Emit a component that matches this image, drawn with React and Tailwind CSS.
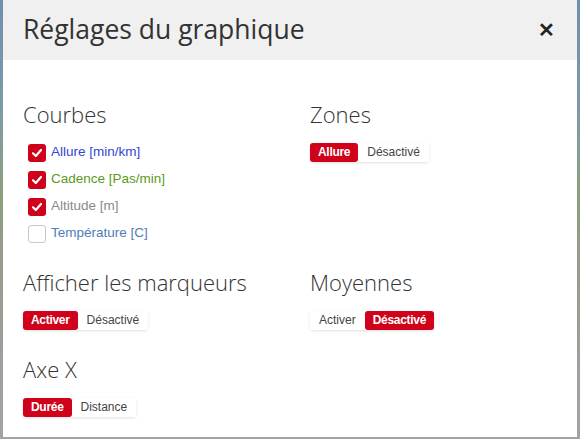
import React from "react";

const OS = { fontFamily: '"Open Sans", "Noto Sans", sans-serif' };
const AR = { fontFamily: '"Liberation Sans", Arial, sans-serif' };

function Check({ checked }) {
  if (!checked)
    return <span className="inline-block w-[18px] h-[18px] rounded-[3px] border border-[#c8c8c8] bg-white" />;
  return (
    <span className="inline-flex w-[18px] h-[18px] rounded-[3px] bg-[#d0021b] items-center justify-center">
      <svg width="12" height="12" viewBox="0 0 12 12">
        <path d="M2 6.3 L4.8 9 L10 3" stroke="white" strokeWidth="2.2" fill="none" strokeLinecap="round" strokeLinejoin="round" />
      </svg>
    </span>
  );
}

function Row({ checked, color, children }) {
  return (
    <div className="flex items-center h-[27px] pl-[5px]">
      <Check checked={checked} />
      <span className={`ml-[5px] text-[13.5px] ${color}`} style={AR}>{children}</span>
    </div>
  );
}

function Toggle({ items, active }) {
  return (
    <div className="inline-flex rounded-[3px] shadow-[0_1px_3px_rgba(0,0,0,0.12)] h-[19px]" style={AR}>
      {items.map((t, i) =>
        i === active ? (
          <span key={t} className="px-[8px] flex items-center bg-[#d0021b] text-white font-bold text-[12px] rounded-[3px] tracking-[-0.3px]">{t}</span>
        ) : (
          <span key={t} className="px-[9px] flex items-center bg-white text-[#444] text-[12px]">{t}</span>
        )
      )}
    </div>
  );
}

function H({ children }) {
  return <h3 className="text-[22px] leading-[28px] text-[#333] font-light" style={OS}>{children}</h3>;
}

export default function App() {
  return (
    <div className="w-[580px] h-[439px] relative overflow-hidden bg-[linear-gradient(180deg,#6e8fae_0%,#7e9aa8_25%,#8aa07a_45%,#9a9a90_60%,#a3a3a3_100%)]">
      <div className="absolute left-[3px] right-[3px] top-0 bottom-[2px] bg-white flex flex-col">
        <div className="h-[60px] bg-[#f0f0f0] flex items-center justify-between pl-[20px] pr-[22px]">
          <h2 className="text-[26.5px] text-[#333] leading-none -mt-[2px]" style={OS}>Réglages du graphique</h2>
          <span className="text-[20px] font-bold text-[#222] leading-none" style={AR}>✕</span>
        </div>
        <div className="pl-[20px] pt-[40px] grid grid-cols-[287px_1fr]">
          <div>
            <H>Courbes</H>
            <div className="mt-[11px]">
              <Row checked color="text-[#3346d3]">Allure [min/km]</Row>
              <Row checked color="text-[#5b9a1c]">Cadence [Pas/min]</Row>
              <Row checked color="text-[#8a8a8a]">Altitude [m]</Row>
              <Row color="text-[#4f7db3]">Température [C]</Row>
            </div>
          </div>
          <div>
            <H>Zones</H>
            <div className="mt-[10px]"><Toggle items={["Allure", "Désactivé"]} active={0} /></div>
          </div>
          <div className="mt-[21px]">
            <H>Afficher les marqueurs</H>
            <div className="mt-[10px]"><Toggle items={["Activer", "Désactivé"]} active={0} /></div>
          </div>
          <div className="mt-[21px]">
            <H>Moyennes</H>
            <div className="mt-[10px]"><Toggle items={["Activer", "Désactivé"]} active={1} /></div>
          </div>
          <div className="mt-[25px]">
            <H>Axe X</H>
            <div className="mt-[10px]"><Toggle items={["Durée", "Distance"]} active={0} /></div>
          </div>
        </div>
      </div>
    </div>
  );
}
